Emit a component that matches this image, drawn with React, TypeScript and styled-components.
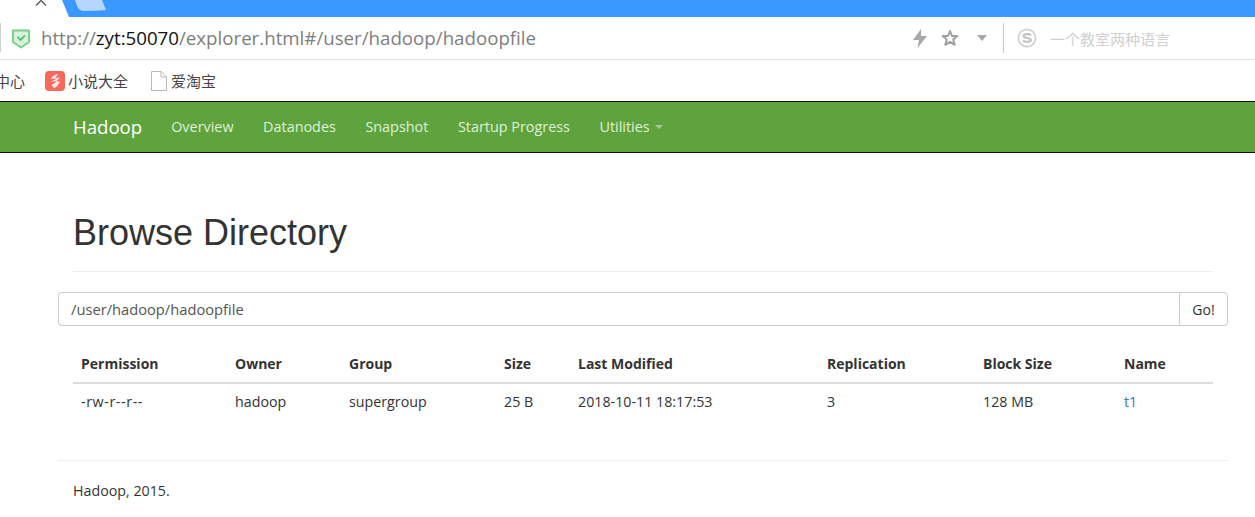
import React from "react";
import styled, { createGlobalStyle } from "styled-components";

const Global = createGlobalStyle`
  html, body { margin: 0; padding: 0; background: #fff; overflow: hidden; }
  body { font-family: "Open Sans", "Noto Sans CJK SC", sans-serif; font-size: 14.25px; color: #333; }
  * { box-sizing: border-box; }
`;

const Page = styled.div`
  width: 1255px;
  height: 517px;
  overflow: hidden;
  display: flex;
  flex-direction: column;
`;

const TabStrip = styled.div`
  height: 17px;
  background: #3a98ff;
  display: flex;
  flex: none;
`;
const ActiveTab = styled.svg`
  width: 110px;
  height: 17px;
  display: block;
`;

const AddressBar = styled.div`
  height: 43px;
  flex: none;
  display: flex;
  align-items: center;
  border-bottom: 1px solid #e4e4e4;
  padding-left: 12px;
  position: relative;
  &::before {
    content: "";
    position: absolute;
    left: 0;
    top: 6px;
    width: 1px;
    height: 29px;
    background: #d0d0d0;
  }
`;
const Url = styled.div`
  margin-left: 11px;
  padding-bottom: 2px;
  font-family: "Open Sans", sans-serif;
  font-size: 18.7px;
  color: #808080;
  white-space: nowrap;
  width: 872px;
  & b { font-weight: 400; color: #111; }
`;
const ToolIcons = styled.div`
  display: flex;
  align-items: center;
  width: 90px;
`;
const Bolt = styled.svg`
  margin-right: 14px;
`;
const Star = styled.svg`
  margin-right: 18px;
`;
const Divider = styled.div`
  width: 1px;
  height: 30px;
  background: #c8c8c8;
`;
const SearchHint = styled.div`
  display: flex;
  align-items: center;
  margin-left: 13px;
  gap: 13px;
  font-family: "Noto Sans CJK SC", sans-serif;
  font-size: 15px;
  color: #d0d0d0;
`;

const BookmarkBar = styled.div`
  height: 41px;
  flex: none;
  display: flex;
  align-items: center;
  font-family: "Noto Sans CJK SC", sans-serif;
  font-size: 15px;
  color: #444;
  margin-left: -5px;
`;
const Bookmark = styled.div<{ $w: number }>`
  display: flex;
  align-items: center;
  gap: 3px;
  width: ${(p) => p.$w}px;
  white-space: nowrap;
`;
const PageIcon = styled.svg`
  margin-right: 1px;
`;

const NavBar = styled.nav`
  height: 52px;
  flex: none;
  background: #5fa33e;
  border-top: 1px solid #111;
  border-bottom: 1px solid #111;
  padding: 0 0 2px 73px;
  display: flex;
  align-items: center;
`;
const Brand = styled.a`
  font-size: 18.6px;
  color: #fff;
  margin-right: 29px;
`;
const NavLink = styled.a`
  font-size: 14.4px;
  color: #dff0d8;
  margin-right: 29.5px;
  display: flex;
  align-items: center;
`;
const Caret = styled.span`
  display: inline-block;
  width: 0;
  height: 0;
  margin-left: 5px;
  margin-top: 2px;
  border-top: 4px solid #a8c79a;
  border-left: 4px solid transparent;
  border-right: 4px solid transparent;
`;

const Main = styled.main`
  flex: 1;
  padding: 0 27px 0 58px;
  display: flex;
  flex-direction: column;
`;
const Header = styled.div`
  margin: 0 15px;
  height: 119px;
  padding-top: 60px;
  border-bottom: 1px solid #eee;
`;
const Title = styled.h1`
  margin: 0;
  font-family: "Liberation Sans", Arial, sans-serif;
  font-weight: 400;
  font-size: 36px;
  line-height: 40px;
  color: #333;
`;
const SearchGroup = styled.div`
  display: flex;
  height: 34px;
  margin-top: 20px;
`;
const PathInput = styled.div`
  flex: 1;
  border: 1px solid #ccc;
  border-right: 0;
  border-radius: 4px 0 0 4px;
  padding: 0 12px;
  display: flex;
  align-items: center;
  color: #555;
  font-size: 14.7px;
`;
const GoButton = styled.button`
  width: 49px;
  border: 1px solid #ccc;
  border-radius: 0 4px 4px 0;
  background: #fff;
  color: #333;
  font: inherit;
  font-size: 14px;
  padding: 0;
`;
const Table = styled.table`
  margin: 20px 15px 0;
  width: 1140px;
  border-collapse: collapse;
  table-layout: fixed;
`;
const Th = styled.th<{ $w: number }>`
  width: ${(p) => p.$w}px;
  text-align: left;
  font-weight: 700;
  font-size: 14px;
  height: 37px;
  padding: 0 8px 2px;
  border-bottom: 2px solid #ddd;
`;
const Td = styled.td<{ $spaced?: boolean }>`
  height: 37px;
  padding: 0 8px 2px;
  letter-spacing: ${(p) => (p.$spaced ? "0.6px" : "0")};
`;
const FileLink = styled.a`
  color: #337ab7;
`;
const Rule = styled.hr`
  margin: 40px 0 0;
  border: 0;
  border-top: 1px solid #eee;
`;
const Footer = styled.p`
  margin: 20px 15px 0;
  line-height: 20px;
`;

const cols: [string, number, string][] = [
  ["Permission", 154, "-rw-r--r--"],
  ["Owner", 114, "hadoop"],
  ["Group", 155, "supergroup"],
  ["Size", 74, "25 B"],
  ["Last Modified", 249, "2018-10-11 18:17:53"],
  ["Replication", 156, "3"],
  ["Block Size", 141, "128 MB"],
  ["Name", 97, ""],
];

export default function App() {
  return (
    <Page>
      <Global />
      <TabStrip>
        <ActiveTab viewBox="0 0 110 17">
          <path d="M0 0H62L69 17H0Z" fill="#fff" />
          <path d="M75 0H102L106 10Q96 11 84 11Q79 11 77 6Z" fill="#b5d6ff" />
          <path d="M36 5.5L41 .5L46 5.5" stroke="#555" strokeWidth="1.3" fill="none" />
        </ActiveTab>
      </TabStrip>
      <AddressBar>
        <svg width="18" height="21" viewBox="0 0 18 21">
          <path d="M1 2.5H17V14L9 19.5L1 14Z" fill="#d8f2dc" stroke="#7bd08a" strokeWidth="2" strokeLinejoin="round" />
          <path d="M5.5 9L8.5 12L13 7.5" stroke="#5cc070" strokeWidth="1.8" fill="none" />
        </svg>
        <Url>http://<b>zyt:50070</b>/explorer.html#/user/hadoop/hadoopfile</Url>
        <ToolIcons>
          <Bolt width="14" height="19" viewBox="0 0 14 19">
            <path d="M8 0L0 11H6L4.5 19L14 7H8Z" fill="#a8a8a8" />
          </Bolt>
          <Star width="18" height="18" viewBox="0 0 18 18">
            <path d="M9 2L11 7H16.3L12.2 10.4L13.7 15.8L9 12.8L4.3 15.8L5.8 10.4L1.7 7H7Z" fill="none" stroke="#a0a0a0" strokeWidth="2" strokeLinejoin="round" />
          </Star>
          <svg width="10" height="6" viewBox="0 0 10 6">
            <path d="M0 0H10L5 6Z" fill="#a8a8a8" />
          </svg>
        </ToolIcons>
        <Divider />
        <SearchHint>
          <svg width="20" height="20" viewBox="0 0 20 20">
            <circle cx="10" cy="10" r="8.6" fill="none" stroke="#cfcfcf" strokeWidth="1.6" />
            <path d="M14 7.2C12.5 5.8 6.5 5.6 6.5 8C6.5 10.5 14 9.5 14 12C14 14.4 7.5 14.2 6 12.6" fill="none" stroke="#c4c4c4" strokeWidth="2.2" />
          </svg>
          <span>一个教室两种语言</span>
        </SearchHint>
      </AddressBar>
      <BookmarkBar>
        <Bookmark $w={50}>中心</Bookmark>
        <Bookmark $w={106}>
          <svg width="20" height="20" viewBox="0 0 20 20">
            <rect width="20" height="20" rx="4" fill="#f8695c" />
            <path d="M13 3C10 3.5 7 5 6 8L12 7.5L5.5 11L13 10L6.5 14L9 17.5C12 15.5 14 13 15 10.5L11 10.8L15 6.5L10.5 7Z" fill="#fff" opacity="0.85" />
          </svg>
          小说大全
        </Bookmark>
        <Bookmark $w={80}>
          <PageIcon width="16" height="20" viewBox="0 0 16 20">
            <path d="M.5.5H10L15.5 6V19.5H.5Z M10 .5V6H15.5" fill="#fff" stroke="#b8b8b8" />
          </PageIcon>
          爱淘宝
        </Bookmark>
      </BookmarkBar>
      <NavBar>
        <Brand>Hadoop</Brand>
        <NavLink>Overview</NavLink>
        <NavLink>Datanodes</NavLink>
        <NavLink>Snapshot</NavLink>
        <NavLink>Startup Progress</NavLink>
        <NavLink>Utilities<Caret /></NavLink>
      </NavBar>
      <Main>
        <Header><Title>Browse Directory</Title></Header>
        <SearchGroup>
          <PathInput>/user/hadoop/hadoopfile</PathInput>
          <GoButton>Go!</GoButton>
        </SearchGroup>
        <Table>
          <thead>
            <tr>{cols.map(([h, w]) => <Th key={h} $w={w}>{h}</Th>)}</tr>
          </thead>
          <tbody>
            <tr>
              {cols.map(([h, , v]) => (
                <Td key={h} $spaced={h === "Permission"}>{h === "Name" ? <FileLink>t1</FileLink> : v}</Td>
              ))}
            </tr>
          </tbody>
        </Table>
        <Rule />
        <Footer>Hadoop, 2015.</Footer>
      </Main>
    </Page>
  );
}
